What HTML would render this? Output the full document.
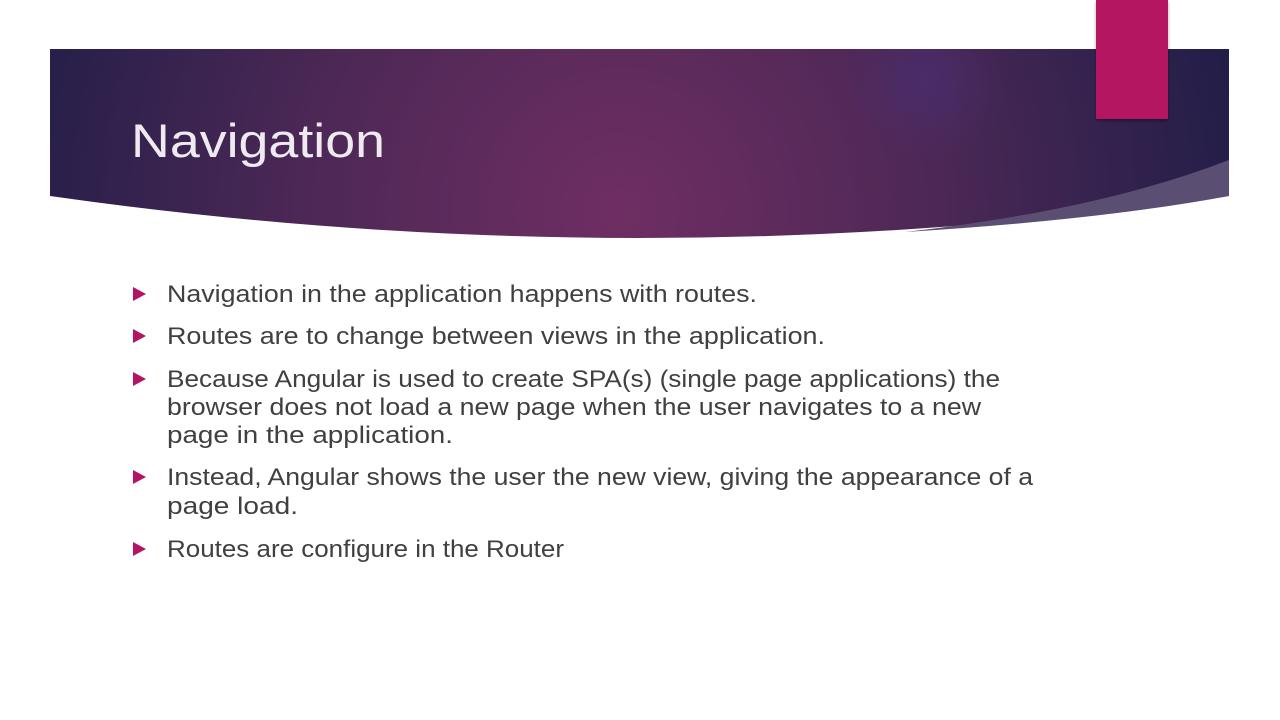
<!DOCTYPE html>
<html><head><meta charset="utf-8"><style>
html,body{margin:0;padding:0;background:#fff;width:1280px;height:720px;overflow:hidden}
svg{display:block}
</style></head><body>
<svg width="1280" height="720" viewBox="0 0 1280 720" xmlns="http://www.w3.org/2000/svg">
<defs>
<radialGradient id="g1" cx="620" cy="210" r="620" gradientUnits="userSpaceOnUse">
<stop offset="0" stop-color="#6f2e63"/>
<stop offset="0.5" stop-color="#4d2856"/>
<stop offset="1" stop-color="#231e48"/>
</radialGradient>
<radialGradient id="g2" cx="925" cy="80" r="80" gradientUnits="userSpaceOnUse">
<stop offset="0" stop-color="#4b2c6c" stop-opacity="0.9"/>
<stop offset="1" stop-color="#4b2c6c" stop-opacity="0"/>
</radialGradient>
<filter id="sh" x="-20%" y="-20%" width="140%" height="140%"><feDropShadow dx="0" dy="2" stdDeviation="1.5" flood-opacity="0.35"/></filter>
</defs>
<path d="M50 49 H1229 V196 Q640 280 50 196 Z" fill="url(#g1)"/>
<path d="M50 49 H1229 V196 Q640 280 50 196 Z" fill="url(#g2)"/>
<path d="M1229 160 Q1100 210 905 232 Q1100 220 1229 196 Z" fill="#5a4f72"/>
<rect x="1096" y="0" width="72" height="119" fill="#b41462" filter="url(#sh)"/>
<text x="131" y="157" font-family="Liberation Sans, sans-serif" font-size="47" fill="#efeaf0" textLength="254" lengthAdjust="spacingAndGlyphs">Navigation</text>
<g fill="#b41462">
<path d="M133 287 L146 294 L133 301 Z"/>
<path d="M133 329 L146 336 L133 343 Z"/>
<path d="M133 372 L146 379 L133 386 Z"/>
<path d="M133 470 L146 477 L133 484 Z"/>
<path d="M133 542 L146 549 L133 556 Z"/>
</g>
<g font-family="Liberation Sans, sans-serif" font-size="24" fill="#404040">
<text x="167" y="302" textLength="590" lengthAdjust="spacingAndGlyphs">Navigation in the application happens with routes.</text>
<text x="167" y="344" textLength="658" lengthAdjust="spacingAndGlyphs">Routes are to change between views in the application.</text>
<text x="167" y="387" textLength="833" lengthAdjust="spacingAndGlyphs">Because Angular is used to create SPA(s)  (single page applications) the</text>
<text x="167" y="415" textLength="814" lengthAdjust="spacingAndGlyphs">browser does not load a new page when the user navigates to a new</text>
<text x="167" y="443" textLength="286" lengthAdjust="spacingAndGlyphs">page in the application.</text>
<text x="167" y="485" textLength="866" lengthAdjust="spacingAndGlyphs">Instead, Angular shows the user the new view, giving the appearance of a</text>
<text x="167" y="514" textLength="131" lengthAdjust="spacingAndGlyphs">page load.</text>
<text x="167" y="557" textLength="397" lengthAdjust="spacingAndGlyphs">Routes are configure in the Router</text>
</g>
</svg>
</body></html>
